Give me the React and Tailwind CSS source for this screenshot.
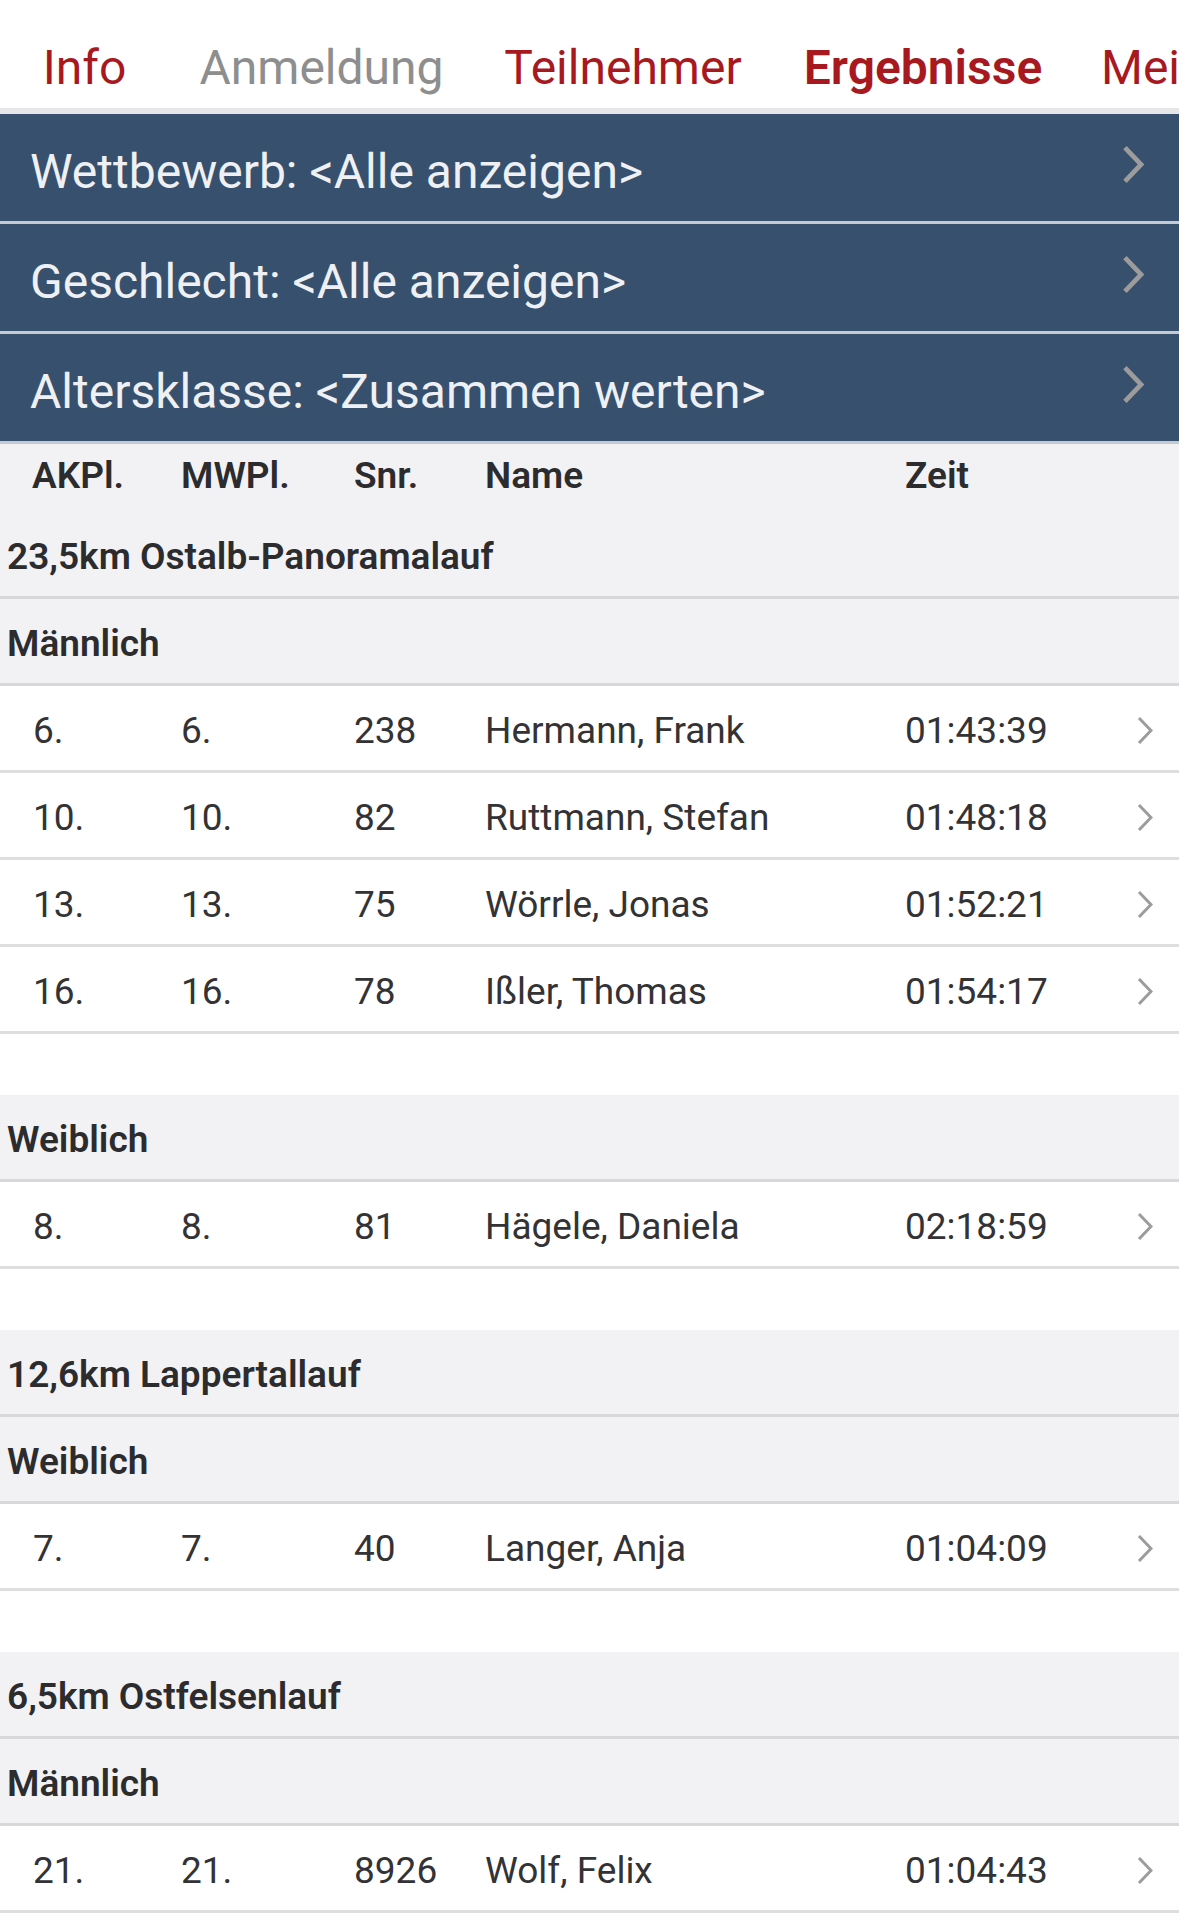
import React from 'react';

const font = { fontFamily: 'Roboto, "Noto Sans", "DejaVu Sans", sans-serif' };

const sections = [
  {
    title: '23,5km Ostalb-Panoramalauf',
    groups: [
      {
        label: 'Männlich',
        rows: [
          ['6.', '6.', '238', 'Hermann, Frank', '01:43:39'],
          ['10.', '10.', '82', 'Ruttmann, Stefan', '01:48:18'],
          ['13.', '13.', '75', 'Wörrle, Jonas', '01:52:21'],
          ['16.', '16.', '78', 'Ißler, Thomas', '01:54:17'],
        ],
      },
      {
        label: 'Weiblich',
        gapBefore: true,
        rows: [['8.', '8.', '81', 'Hägele, Daniela', '02:18:59']],
      },
    ],
  },
  {
    title: '12,6km Lappertallauf',
    groups: [{ label: 'Weiblich', rows: [['7.', '7.', '40', 'Langer, Anja', '01:04:09']] }],
  },
  {
    title: '6,5km Ostfelsenlauf',
    groups: [{ label: 'Männlich', rows: [['21.', '21.', '8926', 'Wolf, Felix', '01:04:43']] }],
  },
];

function Chevron({ className, strokeWidth = 3 }) {
  return (
    <svg viewBox="0 0 16 29" className={className} fill="none" stroke="currentColor" strokeWidth={strokeWidth} strokeLinecap="butt" strokeLinejoin="miter">
      <polyline points="2,2 14,14.5 2,27" />
    </svg>
  );
}

function FilterBar({ label }) {
  return (
    <div className="h-[110px] bg-[#37506e] border-b-[3px] border-[#c6cbd1] flex items-center justify-between pl-[30px] pr-[34px]">
      <span className="text-[48px] text-[#eef0f3] leading-none pt-[8px]">{label}</span>
      <Chevron className="w-[24px] h-[39px] text-[#9c9c9c] -mt-[6px]" strokeWidth={3.5} />
    </div>
  );
}

function GrayRow({ children }) {
  return (
    <div className="h-[87px] bg-[#f2f2f4] border-b-[3px] border-[#d8d8db] flex items-center pl-[7px]">
      <span className="text-[37px] font-semibold text-[#2c2c2e] leading-none pt-[5px]">{children}</span>
    </div>
  );
}

function DataRow({ row }) {
  return (
    <div className="h-[87px] bg-white border-b-[3px] border-[#dedee0] flex items-center pl-[33px] text-[37px] text-[#333336] leading-none">
      <span className="w-[148px] shrink-0 pt-[4px]">{row[0]}</span>
      <span className="w-[173px] shrink-0 pt-[4px]">{row[1]}</span>
      <span className="w-[131px] shrink-0 pt-[4px]">{row[2]}</span>
      <span className="w-[420px] shrink-0 pt-[4px]">{row[3]}</span>
      <span className="w-[232px] shrink-0 pt-[4px]">{row[4]}</span>
      <Chevron className="w-[16px] h-[29px] mt-[4px] text-[#9c9c9c]" strokeWidth={3} />
    </div>
  );
}

export default function App() {
  return (
    <div className="w-[1179px] min-h-[1929px] bg-white overflow-hidden" style={font}>
      {/* Tabs */}
      <nav className="h-[114px] border-b-[6px] border-[#e6e6e9] flex text-[48px] leading-none whitespace-nowrap overflow-hidden">
        <div className="ml-[20px] w-[129px] shrink-0 flex items-center justify-center pt-[28px] text-[#a8191f]">Info</div>
        <div className="ml-[25px] w-[295px] shrink-0 flex items-center justify-center pt-[28px] text-[#8e8e8e]">Anmeldung</div>
        <div className="ml-[8px] w-[292px] shrink-0 flex items-center justify-center pt-[28px] text-[#a8191f]">Teilnehmer</div>
        <div className="ml-[8px] w-[292px] shrink-0 h-[114px] -mb-[6px] border-b-[6px] border-[#a8191f] flex items-center justify-center pt-[28px] font-semibold text-[#a8191f]">Ergebnisse</div>
        <div className="ml-[8px] shrink-0 flex items-center pl-[24px] pt-[28px] text-[#a8191f]">Meine</div>
      </nav>

      {/* Filters */}
      <FilterBar label="Wettbewerb: <Alle anzeigen>" />
      <FilterBar label="Geschlecht: <Alle anzeigen>" />
      <FilterBar label="Altersklasse: <Zusammen werten>" />

      {/* Column header */}
      <div className="h-[68px] bg-[#f2f2f4] flex items-center pl-[32px] pb-[6px] text-[37px] font-semibold text-[#2c2c2e] leading-none">
        <span className="w-[149px] shrink-0">AKPl.</span>
        <span className="w-[173px] shrink-0">MWPl.</span>
        <span className="w-[131px] shrink-0">Snr.</span>
        <span className="w-[420px] shrink-0">Name</span>
        <span>Zeit</span>
      </div>

      {sections.map((s, si) => (
        <div key={si}>
          {si > 0 && <div className="h-[61px] bg-white" />}
          <GrayRow>{s.title}</GrayRow>
          {s.groups.map((g, gi) => (
            <div key={gi}>
              {g.gapBefore && <div className="h-[61px] bg-white" />}
              <GrayRow>{g.label}</GrayRow>
              {g.rows.map((r, ri) => (
                <DataRow key={ri} row={r} />
              ))}
            </div>
          ))}
        </div>
      ))}
    </div>
  );
}
